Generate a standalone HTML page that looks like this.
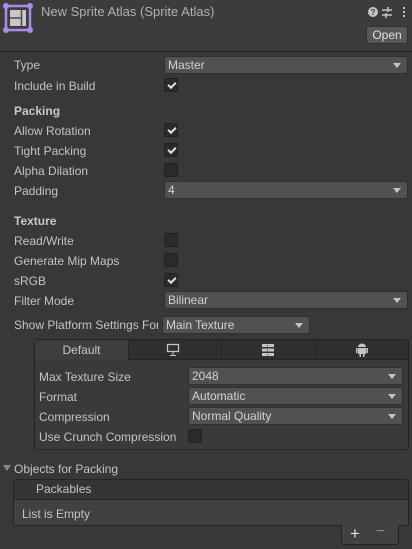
<!DOCTYPE html>
<html><head><style>
*{box-sizing:border-box;margin:0;padding:0}
body{width:412px;height:549px;background:#383838;font-family:"Liberation Sans",sans-serif;font-size:12px;color:#c4c4c4;position:relative;overflow:hidden}
.a{position:absolute}
.hdr{left:0;top:0;width:412px;height:52px;background:#3c3c3c;border-bottom:1px solid #232323}
.lbl{position:absolute;left:14px;line-height:14px}
.b{font-weight:bold;color:#c8c8c8}
.dd{position:absolute;height:18px;background:#515151;border:1px solid #303030;border-radius:3px;color:#d2d2d2;padding-left:3px;line-height:16px}
.dd:after{content:"";position:absolute;right:6px;top:6px;border-left:4px solid transparent;border-right:4px solid transparent;border-top:5px solid #c4c4c4}
.cb{position:absolute;width:14px;height:14px;background:#2a2a2a;border:1px solid #212121;border-radius:2px}
.cb.c:after{content:"";position:absolute;left:3px;top:1px;width:6px;height:3px;border-left:2px solid #e0e0e0;border-bottom:2px solid #e0e0e0;transform:translate(0,2px) rotate(-45deg)}
</style></head><body>
<div class="a hdr"></div>
<svg class="a" style="left:3px;top:3px" width="30" height="30" viewBox="0 0 30 30">
<rect x="7" y="7" width="16" height="16" fill="#c8c8c8"/>
<line x1="18.5" y1="7" x2="18.5" y2="23" stroke="#4a4a4a" stroke-width="1.5"/>
<line x1="7" y1="15" x2="18" y2="15" stroke="#4a4a4a" stroke-width="1.5"/>
<rect x="3" y="3" width="24" height="24" fill="none" stroke="#a98be8" stroke-width="2.5"/>
<circle cx="3" cy="3" r="3" fill="#a98be8"/><circle cx="27" cy="3" r="3" fill="#a98be8"/><circle cx="3" cy="27" r="3" fill="#a98be8"/><circle cx="27" cy="27" r="3" fill="#a98be8"/>
</svg>
<div class="a" style="left:41px;top:4px;font-size:13px;color:#b0b0b0">New Sprite Atlas (Sprite Atlas)</div>
<svg class="a" style="left:367px;top:5px" width="42" height="14" viewBox="0 0 42 14">
<circle cx="6" cy="7" r="5" fill="#c4c4c4"/><text x="6" y="10" font-size="8" font-weight="bold" text-anchor="middle" fill="#383838" font-family="Liberation Sans">?</text>
<g stroke="#c4c4c4" stroke-width="1.5"><line x1="15" y1="5" x2="25" y2="5"/><line x1="15" y1="10" x2="25" y2="10"/><line x1="21" y1="2" x2="21" y2="7"/><line x1="19" y1="8" x2="19" y2="13"/></g>
<g fill="#c4c4c4"><rect x="36" y="2" width="2" height="2"/><rect x="36" y="6" width="2" height="2"/><rect x="36" y="10" width="2" height="2"/></g>
</svg>
<div class="a" style="left:366px;top:26px;width:42px;height:18px;background:#585858;border:1px solid #303030;border-radius:3px;color:#e0e0e0;text-align:center;line-height:16px;font-size:12px">Open</div>

<div class="lbl" style="top:58px">Type</div><div class="dd" style="left:164px;top:56px;width:244px">Master</div>
<div class="lbl" style="top:79px">Include in Build</div><div class="cb c" style="left:164px;top:78px"></div>
<div class="lbl b" style="top:104px">Packing</div>
<div class="lbl" style="top:124px">Allow Rotation</div><div class="cb c" style="left:164px;top:123px"></div>
<div class="lbl" style="top:144px">Tight Packing</div><div class="cb c" style="left:164px;top:143px"></div>
<div class="lbl" style="top:164px">Alpha Dilation</div><div class="cb" style="left:164px;top:163px"></div>
<div class="lbl" style="top:184px">Padding</div><div class="dd" style="left:164px;top:181px;width:244px">4</div>
<div class="lbl b" style="top:214px">Texture</div>
<div class="lbl" style="top:234px">Read/Write</div><div class="cb" style="left:164px;top:233px"></div>
<div class="lbl" style="top:254px">Generate Mip Maps</div><div class="cb" style="left:164px;top:253px"></div>
<div class="lbl" style="top:274px">sRGB</div><div class="cb c" style="left:164px;top:273px"></div>
<div class="lbl" style="top:294px">Filter Mode</div><div class="dd" style="left:164px;top:291px;width:244px">Bilinear</div>
<div class="lbl" style="top:318px;width:144px;overflow:hidden;white-space:nowrap">Show Platform Settings For</div><div class="dd" style="left:162px;top:316px;width:148px">Main Texture</div>

<div class="a" style="left:34px;top:339px;width:375px;height:111px;border:1px solid #242424;border-radius:3px;background:#3a3a3a"></div>
<div class="a" style="left:35px;top:340px;width:93px;height:20px;background:#3e3e3e;text-align:center;line-height:20px;color:#c8c8c8">Default</div>
<div class="a" style="left:128px;top:340px;width:280px;height:20px;background:#2f2f2f;border-left:1px solid #242424;border-bottom:1px solid #242424"></div>
<div class="a" style="left:221px;top:340px;width:1px;height:20px;background:#242424"></div>
<div class="a" style="left:315px;top:340px;width:1px;height:20px;background:#242424"></div>
<svg class="a" style="left:166px;top:343px" width="14" height="14" viewBox="0 0 14 14"><rect x="1.5" y="1.5" width="11" height="7" fill="none" stroke="#c4c4c4" stroke-width="1.3"/><line x1="7" y1="9" x2="7" y2="12" stroke="#c4c4c4"/><line x1="4" y1="12.5" x2="10" y2="12.5" stroke="#c4c4c4"/></svg>
<svg class="a" style="left:262px;top:343px" width="12" height="14" viewBox="0 0 12 14"><g fill="#c4c4c4"><rect x="0" y="1" width="12" height="3"/><rect x="0" y="5.5" width="12" height="3"/><rect x="0" y="10" width="12" height="3"/></g><g fill="#2f2f2f"><rect x="5" y="2" width="1" height="1"/><rect x="5" y="6.5" width="1" height="1"/><rect x="5" y="11" width="1" height="1"/></g></svg>
<svg class="a" style="left:356px;top:342px" width="12" height="15" viewBox="0 0 12 15"><path d="M2 5a4 3.5 0 0 1 8 0z" fill="#c4c4c4"/><rect x="2" y="6" width="8" height="6" fill="#c4c4c4"/><rect x="0" y="6" width="1.5" height="5" fill="#c4c4c4"/><rect x="10.5" y="6" width="1.5" height="5" fill="#c4c4c4"/><rect x="3.5" y="12" width="1.5" height="3" fill="#c4c4c4"/><rect x="7" y="12" width="1.5" height="3" fill="#c4c4c4"/></svg>

<div class="lbl" style="left:39px;top:370px">Max Texture Size</div><div class="dd" style="left:188px;top:367px;width:215px">2048</div>
<div class="lbl" style="left:39px;top:390px">Format</div><div class="dd" style="left:188px;top:387px;width:215px">Automatic</div>
<div class="lbl" style="left:39px;top:410px">Compression</div><div class="dd" style="left:188px;top:407px;width:215px">Normal Quality</div>
<div class="lbl" style="left:39px;top:430px">Use Crunch Compression</div><div class="cb" style="left:188px;top:429px"></div>

<div class="a" style="left:3px;top:465px;border-left:4px solid transparent;border-right:4px solid transparent;border-top:6px solid #888"></div>
<div class="lbl" style="top:462px">Objects for Packing</div>
<div class="a" style="left:13px;top:479px;width:396px;height:21px;background:#353535;border:1px solid #242424;border-radius:3px 3px 0 0;padding-left:22px;line-height:19px">Packables</div>
<div class="a" style="left:13px;top:499px;width:396px;height:27px;background:#414141;border:1px solid #242424;padding-left:8px;line-height:28px">List is Empty</div>
<div class="a" style="left:341px;top:525px;width:58px;height:20px;background:#414141;border:1px solid #242424;border-top:none;border-radius:0 0 3px 3px"></div>
<div class="a" style="left:350px;top:524px;font-size:17px;color:#e0e0e0">+</div>
<div class="a" style="left:376px;top:523px;font-size:16px;color:#8a8a8a">−</div>
</body></html>
